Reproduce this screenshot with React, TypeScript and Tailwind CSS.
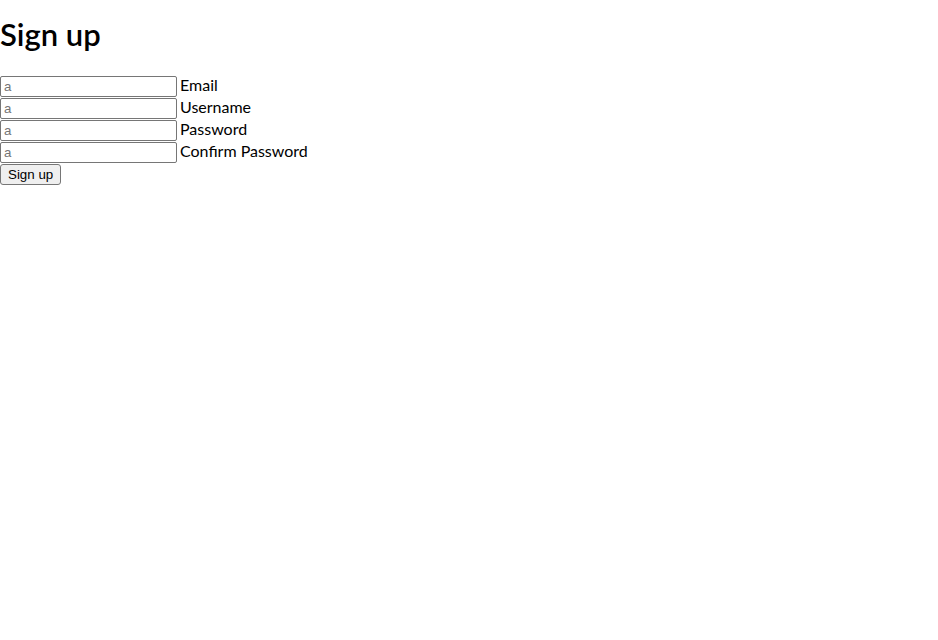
export default function App() {
  const fields = ["Email", "Username", "Password", "Confirm Password"];

  return (
    <div className="min-h-screen bg-white text-black font-['Lato',sans-serif]">
      <h1 className="text-[31px] font-semibold leading-[38px] pt-[15px] pb-[23px]">Sign up</h1>
      <form className="flex flex-col">
        {fields.map((name) => (
          <div key={name} className="flex items-start h-[22px]">
            <input
              type={name.includes("Password") ? "password" : "text"}
              placeholder="a"
              className="w-[177px] h-[21px] border border-[#767676] rounded-[2px] px-[3px] text-[13.33px] font-['Liberation_Sans',Arial,sans-serif] placeholder:text-[#757575]"
            />
            <label className="ml-[3px] text-[16px] leading-[18px]">{name}</label>
          </div>
        ))}
        <div className="flex">
          <button
            type="submit"
            className="h-[21px] px-[7px] border border-[#767676] rounded-[3px] bg-[#efefef] text-[13.33px] leading-none font-['Liberation_Sans',Arial,sans-serif]"
          >
            Sign up
          </button>
        </div>
      </form>
    </div>
  );
}
